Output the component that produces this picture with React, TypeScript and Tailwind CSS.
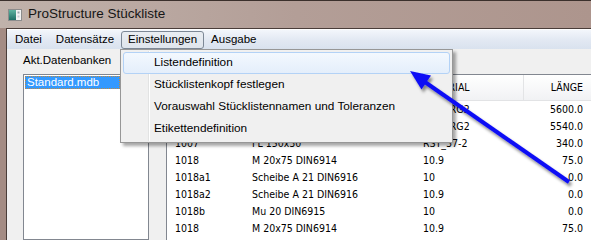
import React from 'react';

interface Row {
  pos: string;
  name: string;
  material: string;
  length: string;
}

const rows: Row[] = [
  { pos: '1001', name: 'HEA 200', material: 'S235JRG2', length: '5600.0' },
  { pos: '1002', name: 'HEA 200', material: 'S235JRG2', length: '5540.0' },
  { pos: '1007', name: 'FL 150x30', material: 'RST_37-2', length: '340.0' },
  { pos: '1018', name: 'M 20x75 DIN6914', material: '10.9', length: '75.0' },
  { pos: '1018a1', name: 'Scheibe A 21 DIN6916', material: '10', length: '0.0' },
  { pos: '1018a2', name: 'Scheibe A 21 DIN6916', material: '10.9', length: '0.0' },
  { pos: '1018b', name: 'Mu 20 DIN6915', material: '10', length: '0.0' },
  { pos: '1018', name: 'M 20x75 DIN6914', material: '10.9', length: '75.0' },
];

const menuItems = ['Datei', 'Datensätze', 'Einstellungen', 'Ausgabe'];

const dropdownItems = [
  'Listendefinition',
  'Stücklistenkopf festlegen',
  'Vorauswahl Stücklistennamen und Toleranzen',
  'Etikettendefinition',
];

const AppIcon = () => (
  <svg width="14" height="12" viewBox="0 0 14 12">
    <defs>
      <linearGradient id="ico" x1="0" y1="0" x2="0" y2="1">
        <stop offset="0" stopColor="#5fb3a0" />
        <stop offset="1" stopColor="#1f6f66" />
      </linearGradient>
    </defs>
    <rect x="0.5" y="0.5" width="13" height="11" fill="#f4f4f4" stroke="#8c8c8c" />
    <rect x="1" y="1" width="7" height="10" fill="url(#ico)" />
    <rect x="9.5" y="2.5" width="2" height="2" fill="#9aa5ad" />
    <rect x="9.5" y="6.5" width="2" height="2" fill="#c5ccd1" />
  </svg>
);

const Arrow = () => (
  <svg className="absolute left-0 top-0 pointer-events-none" width="591" height="240" viewBox="0 0 591 240">
    <defs>
      <filter id="sh" x="-20%" y="-20%" width="140%" height="140%">
        <feDropShadow dx="2" dy="3" stdDeviation="1.6" floodColor="#000" floodOpacity="0.45" />
      </filter>
    </defs>
    <g filter="url(#sh)">
      <line x1="569" y1="182" x2="422" y2="80" stroke="#1010f5" strokeWidth="4" />
      <polygon points="410,71 431,75.5 421.5,89.5" fill="#1010f5" />
    </g>
  </svg>
);

export default function App() {
  return (
    <div className="relative w-[591px] h-[240px] overflow-hidden bg-[#a48c84] font-['Liberation_Sans',sans-serif] text-black">
      {/* title bar */}
      <div className="h-[28px] border-t border-[#3b302c] flex items-center pl-[8px] gap-[6px] bg-gradient-to-r from-[#c0b2ab] via-[#b39e97] to-[#ad958d]">
        <AppIcon />
        <span className="text-[13.5px] text-[#161616]">ProStructure Stückliste</span>
      </div>

      {/* window body */}
      <div className="ml-[6px] h-[212px] border-l border-t border-[#4a3d39] bg-[#f0f0f0] flex flex-col">
        {/* menu bar */}
        <div className="h-[20px] flex items-center pl-[1px] border-t border-white bg-gradient-to-b from-[#f3f6fb] via-[#e3e9f3] to-[#d9e2ee]">
          {menuItems.map(item => (
            <div
              key={item}
              className={`h-[18px] px-[6px] flex items-center text-[11.5px] border rounded-[3px] ${
                item === 'Einstellungen'
                  ? 'border-[#7d8896] bg-gradient-to-b from-[#e9edf2] to-[#dfe5ec]'
                  : 'border-transparent'
              }`}
            >
              {item}
            </div>
          ))}
        </div>

        {/* content */}
        <div className="flex-1 flex min-h-0">
          {/* left panel */}
          <div className="w-[159px] pl-[16px] flex flex-col">
            <div className="mt-[4px] h-[14px] leading-[14px] text-[11.5px]">Akt.Datenbanken</div>
            <div className="mt-[7px] w-[126px] flex-1 border border-[#828790] bg-white pt-[1px] pl-[1px]">
              <div className="w-[95px] h-[13px] leading-[13px] bg-[#3399ff] text-white text-[11.5px] pl-[2px] outline outline-1 outline-dotted outline-[#c08a40] -outline-offset-1">
                Standard.mdb
              </div>
            </div>
          </div>

          {/* table */}
          <div className="flex-1 pt-[25px] min-w-0">
            <div className="h-full border-l border-t border-[#828790] bg-white font-['DejaVu_Sans_Condensed','DejaVu_Sans',sans-serif] text-[10.5px]">
              <div className="h-[26px] flex bg-gradient-to-b from-white to-[#f1f2f4] border-b border-[#e2e3e5]">
                <div className="w-[77px] pl-[8px] flex items-center border-r border-[#e3e4e6]">POS</div>
                <div className="w-[171px] pl-[8px] flex items-center border-r border-[#e3e4e6]">BEZEICHNUNG</div>
                <div className="w-[109px] pl-[8px] flex items-center border-r border-[#e3e4e6]">MATERIAL</div>
                <div className="flex-1 pr-[8px] flex items-center justify-end">LÄNGE</div>
              </div>
              {rows.map((r, i) => (
                <div key={i} className="h-[17px] flex items-center">
                  <div className="w-[77px] pl-[8px]">{r.pos}</div>
                  <div className="w-[171px] pl-[8px]">{r.name}</div>
                  <div className="w-[109px] pl-[8px]">{r.material}</div>
                  <div className="flex-1 pr-[8px] text-right">{r.length}</div>
                </div>
              ))}
            </div>
          </div>
        </div>
      </div>

      {/* dropdown menu */}
      <div className="absolute left-[120px] top-[49px] w-[333px] h-[94px] border border-[#979797] bg-[#f0f0f0] shadow-[3px_3px_3px_rgba(0,0,0,0.35)] pt-[2px]">
        <div className="absolute left-[27px] top-[1px] bottom-[1px] w-[2px] border-l border-[#e2e3e3] border-r border-r-white" />
        {dropdownItems.map((item, i) => (
          <div
            key={item}
            className={`relative mx-[2px] h-[22px] flex items-center pl-[30px] text-[11.8px] rounded-[3px] border ${
              i === 0
                ? 'border-[#b3d2f6] bg-gradient-to-b from-[#f3f8fe] to-[#e4eefb]'
                : 'border-transparent'
            }`}
          >
            {item}
          </div>
        ))}
      </div>

      <Arrow />
    </div>
  );
}
